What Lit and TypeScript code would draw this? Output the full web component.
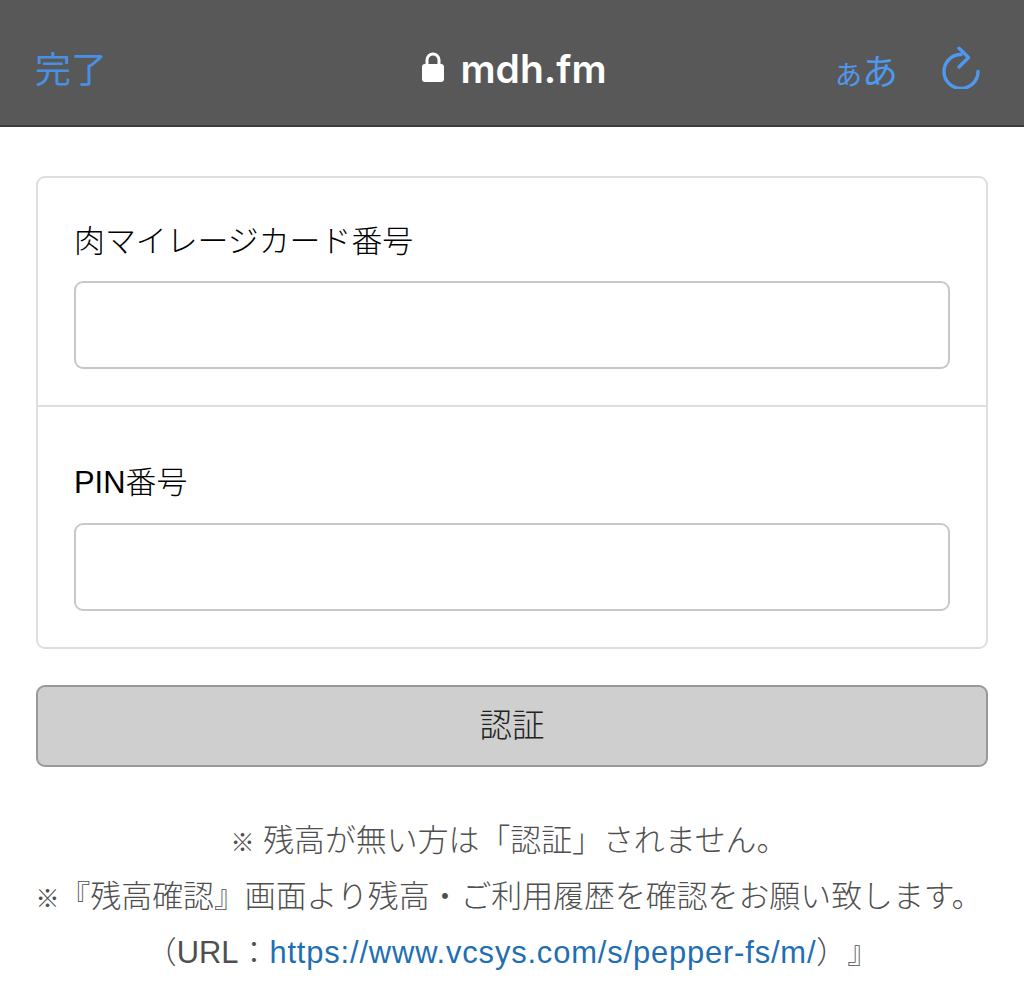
import { LitElement, html, css } from "lit";
import { customElement } from "lit/decorators.js";

@customElement("app-root")
export class AppRoot extends LitElement {
  static styles = css`
    :host {
      display: block;
      width: 1024px;
      height: 993px;
      overflow: hidden;
      background: #fff;
      font-family: "Liberation Sans", "Noto Sans CJK JP", sans-serif;
      font-size: 30.9px;
      font-weight: 300;
      color: #222;
      text-spacing-trim: space-all;
    }
    .bar {
      height: 127px;
      box-sizing: border-box;
      background: #585858;
      border-bottom: 2px solid #3c3c3c;
      display: grid;
      grid-template-columns: 1fr auto 1fr;
      align-items: center;
      padding: 8px 30px 0 35px;
      color: #4a90e2;
    }
    .done {
      font-family: "Noto Sans CJK JP", sans-serif;
      font-weight: 400;
      font-size: 36px;
      line-height: 1;
    }
    .site {
      display: flex;
      align-items: center;
      gap: 16px;
      color: #fff;
      font-family: "Inter", "Liberation Sans", sans-serif;
      font-weight: 600;
      font-size: 39px;
      line-height: 1;
    }
    .site span {
      padding-top: 4px;
    }
    .tools {
      display: flex;
      justify-content: flex-end;
      align-items: center;
      gap: 44px;
      padding-right: 14px;
    }
    .aa {
      font-family: "Noto Sans CJK JP", sans-serif;
      font-weight: 400;
      display: flex;
      align-items: baseline;
      color: #4f98ee;
      line-height: 1;
      font-size: 36px;
      padding-top: 4px;
    }
    .aa small {
      font-size: 27px;
    }
    svg {
      display: block;
    }
    main {
      padding: 49px 36px 0;
    }
    .card {
      border: 2px solid #dedede;
      border-radius: 9px;
    }
    .group {
      padding: 54px 36px 36px;
    }
    .group + .group {
      border-top: 2px solid #dedede;
    }
    .group:first-child {
      padding-top: 42px;
    }
    label {
      display: block;
      height: 44px;
      line-height: 44px;
      margin-bottom: 17px;
      color: #000;
    }
    .group + .group label {
      margin-bottom: 18px;
    }
    .input {
      height: 88px;
      box-sizing: border-box;
      border: 2px solid #c8c8c8;
      border-radius: 9px;
      background: #fff;
    }
    .btn {
      margin-top: 36px;
      height: 82px;
      box-sizing: border-box;
      border: 2px solid #999;
      border-radius: 9px;
      background: #cfcfcf;
      display: flex;
      align-items: center;
      justify-content: center;
      color: #222;
      font-size: 32.5px;
      padding-bottom: 8px;
    }
    .notes {
      margin: 46px -20px 0;
      text-align: center;
      color: #4f4f4f;
      line-height: 55.5px;
      white-space: nowrap;
    }
    .line {
      height: 55.5px;
    }
    .offset {
      padding-right: 6px;
    }
    .url {
      padding-top: 1px;
    }
    .mark {
      font-size: 24px;
      font-weight: 400;
      line-height: 1;
    }
    .notes a {
      color: #1f6fb2;
      text-decoration: none;
      letter-spacing: 0.84px;
    }
  `;

  render() {
    return html`
      <header class="bar">
        <div class="done">完了</div>
        <div class="site">
          <svg width="22" height="32" viewBox="0 0 22 32">
            <path d="M5 15V9a6 6 0 0 1 12 0v6" fill="none" stroke="#fff" stroke-width="3" />
            <rect x="0" y="13" width="22" height="18" rx="3" fill="#fff" />
          </svg>
          <span>mdh.fm</span>
        </div>
        <div class="tools">
          <div class="aa"><small>あ</small><span>あ</span></div>
          <svg width="38" height="45" viewBox="0 0 38 45" fill="none" stroke="#4f98ee" stroke-width="3.4" stroke-linecap="round" stroke-linejoin="round">
            <path d="M19 10.5A17 17 0 1 0 36 27.5" />
            <path d="M17 4.2L26.5 13.5L17 23" />
          </svg>
        </div>
      </header>
      <main>
        <section class="card">
          <div class="group">
            <label>肉マイレージカード番号</label>
            <div class="input"></div>
          </div>
          <div class="group">
            <label>PIN番号</label>
            <div class="input"></div>
          </div>
        </section>
        <div class="btn">認証</div>
        <div class="notes">
          <div class="line offset"><span class="mark">※</span> 残高が無い方は「認証」されません。</div>
          <div class="line offset"><span class="mark">※</span>『残高確認』画面より残高・ご利用履歴を確認をお願い致します。</div>
          <div class="line url">（URL：<a href="#">https://www.vcsys.com/s/pepper-fs/m/</a>）』</div>
        </div>
      </main>
    `;
  }
}
